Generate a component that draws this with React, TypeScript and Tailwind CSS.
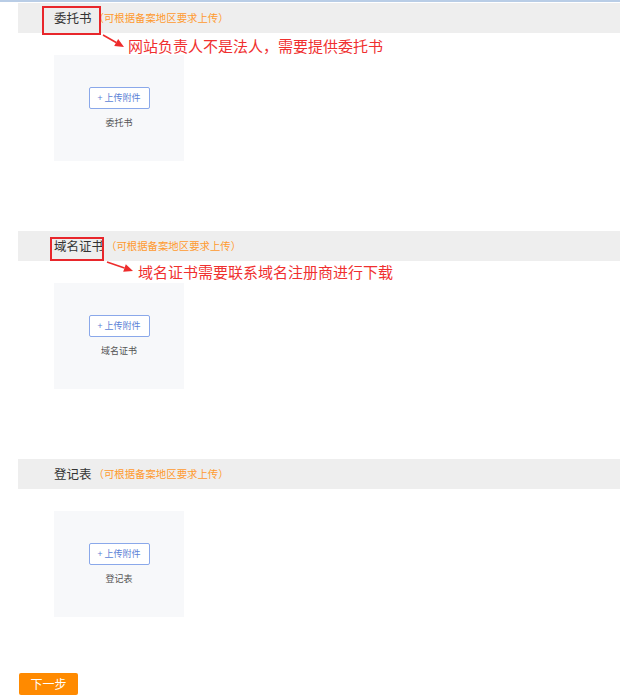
import React from 'react';

const font = { fontFamily: '"Microsoft YaHei", "Noto Sans CJK SC", "Noto Sans", sans-serif' };

interface Note {
  box: string;
  arrow: { left: number; top: number; x1: number; y1: number; x2: number; y2: number };
  text: string;
  textPos: string;
}

interface SectionProps {
  title: string;
  note?: Note;
  last?: boolean;
}

const Arrow = ({ x1, y1, x2, y2 }: { x1: number; y1: number; x2: number; y2: number }) => {
  const ang = Math.atan2(y2 - y1, x2 - x1);
  const len = 9;
  const w = 4;
  const bx = x2 - len * Math.cos(ang);
  const by = y2 - len * Math.sin(ang);
  const px = -Math.sin(ang) * w;
  const py = Math.cos(ang) * w;
  return (
    <svg width="40" height="24" viewBox="0 0 40 24" className="overflow-visible">
      <line x1={x1} y1={y1} x2={bx} y2={by} stroke="#ee2c2c" strokeWidth="1.6" />
      <polygon points={`${x2},${y2} ${bx + px},${by + py} ${bx - px},${by - py}`} fill="#ee2c2c" />
    </svg>
  );
};

const Section = ({ title, note, last }: SectionProps) => (
  <div className={last ? 'mb-[56px]' : 'mb-[70px]'}>
    <div className="relative h-[30px] bg-[#eeeeee] flex items-center pl-[36px]">
      <span className="text-[12.5px] text-[#333]">{title}</span>
      <span className="text-[10.4px] text-[#ff9a2e] ml-[2px]">（可根据备案地区要求上传）</span>
      {note && (
        <>
          <div className={`absolute border-2 border-[#e8262b] ${note.box}`} />
          <div className="absolute" style={{ left: note.arrow.left, top: note.arrow.top }}>
            <Arrow x1={note.arrow.x1} y1={note.arrow.y1} x2={note.arrow.x2} y2={note.arrow.y2} />
          </div>
          <div className={`absolute whitespace-nowrap text-[15px] leading-[20px] text-[#f0302f] ${note.textPos}`}>
            {note.text}
          </div>
        </>
      )}
    </div>
    <div className="pl-[36px] pt-[22px]">
      <div className="w-[130px] h-[106px] bg-[#f7f8fa] flex flex-col items-center pt-[32px]">
        <button className="w-[61px] h-[22px] border border-[#8aa8ea] rounded-[2px] bg-white text-[9px] text-[#5b7fd6] flex items-center justify-center">
          + 上传附件
        </button>
        <div className="mt-[8px] text-[9px] leading-[12px] text-[#555]">{title}</div>
      </div>
    </div>
  </div>
);

export default function App() {
  return (
    <div className="w-[620px] h-[695px] overflow-hidden bg-white border-t-2 border-[#b9cde6]" style={font}>
      <div className="pt-[1px] pl-[18px]">
        <Section
          title="委托书"
          note={{
            box: 'left-[24px] top-[3px] w-[59px] h-[29px]',
            arrow: { left: 84, top: 31, x1: 1, y1: 1, x2: 22, y2: 13 },
            text: '网站负责人不是法人，需要提供委托书',
            textPos: 'left-[110px] top-[33px]',
          }}
        />
        <Section
          title="域名证书"
          note={{
            box: 'left-[32px] top-[6px] w-[54px] h-[24px]',
            arrow: { left: 88, top: 30, x1: 1, y1: 1, x2: 27, y2: 10 },
            text: '域名证书需要联系域名注册商进行下载',
            textPos: 'left-[120px] top-[31px]',
          }}
        />
        <Section title="登记表" last />
      </div>
      <button className="ml-[19px] w-[59px] h-[22px] rounded-[2px] bg-[#ff8a00] text-white text-[12px] flex items-center justify-center">
        下一步
      </button>
    </div>
  );
}
